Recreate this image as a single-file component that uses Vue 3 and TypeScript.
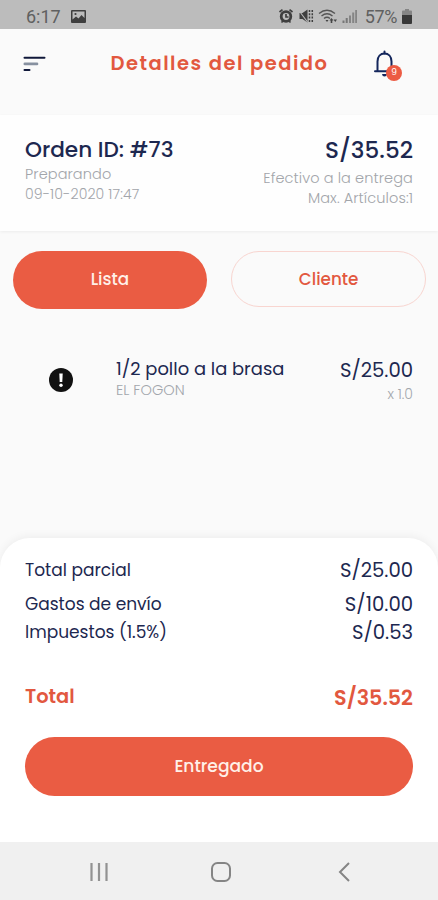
<script setup lang="ts">
interface Line {
  id: string
  label: string
  amount: string
}

const lines: Line[] = [
  { id: 'subtotal', label: 'Total parcial', amount: 'S/25.00' },
  { id: 'delivery', label: 'Gastos de envío', amount: 'S/10.00' },
  { id: 'tax', label: 'Impuestos (1.5%)', amount: 'S/0.53' },
]
</script>

<template>
  <div class="screen">
    <div class="status">
      <span class="clock">6:17</span>
      <svg class="photo" width="15" height="13" viewBox="0 0 15 13">
        <path fill="#3f3f3f" fill-rule="evenodd" d="M1 0h13a1 1 0 0 1 1 1v11a1 1 0 0 1-1 1H1a1 1 0 0 1-1-1V1a1 1 0 0 1 1-1zM1.500 1.500v8l3.500-3 2.500 2L10.500 5 13.500 8V1.500z" />
        <circle cx="4.500" cy="4" r="1.100" fill="#3f3f3f" />
      </svg>
      <svg class="indicators" width="81" height="18" viewBox="0 0 81 18">
        <g fill="none" stroke="#3f3f3f" stroke-width="1.700">
          <circle cx="8" cy="9.500" r="4.800" stroke-width="2.800" />
          <path d="M1.500 5L4.500 2.600M14.500 5L11.500 2.600M8 7v3h2.500M3.500 15.500l2-2M12.500 15.500l-2-2" />
        </g>
        <path fill="#3f3f3f" d="M21.500 6h3l5-3.500v13l-5-3.500h-3z" />
        <path fill="none" stroke="#bcbcbc" stroke-width="1.100" d="M20.500 3l9 12" />
        <path fill="none" stroke="#3f3f3f" stroke-width="1.500" stroke-dasharray="2 1.300" d="M31.500 3v12.500M34.300 3v12.500" />
        <g fill="none" stroke="#555" stroke-width="1.400">
          <path d="M41 6.500q8-6.500 16 0M43.500 9q5.500-4.500 11 0M46 11.500q3-2.500 6 0" />
        </g>
        <path fill="#444" d="M47.500 13h3L49 15zM51.500 13.500l2-2.500 2 2.500zM55.500 12.500H59l-1.700 2.500zM52.700 13h1.600v3h-1.600z" />
        <g fill="#777">
          <path d="M64.500 13.500h2V16h-2zM67.700 11h2v5h-2z" />
          <path d="M71 8.500h2V16h-2zM74.200 5.500h2V16h-2zM77.200 3h1.800v13h-1.800z" opacity=".8" />
        </g>
      </svg>
      <span class="percent">57%</span>
      <svg class="battery" width="10" height="15" viewBox="0 0 10 15">
        <path fill="#858585" d="M3 0h4v1.500h2q1 0 1 1V7H0V2.500q0-1 1-1h2z" />
        <path fill="#383838" d="M0 6h10v8q0 1-1 1H1q-1 0-1-1z" />
      </svg>
    </div>

    <header class="header">
      <svg class="menu" width="23" height="16" viewBox="0 0 23 16">
        <path stroke="#10183a" stroke-width="2" stroke-linecap="round" d="M1.500 1.800h20M1.500 14h5" />
        <path stroke="#8791a0" stroke-width="2.600" stroke-linecap="round" d="M1.800 7.900h12.200" />
      </svg>
      <h1 class="title">Detalles del pedido</h1>
      <div class="bell">
        <svg width="24" height="30" viewBox="0 0 24 30">
          <path fill="none" stroke="#14265c" stroke-width="2" d="M4.500 22V12.500C4.500 7.500 7.500 4.500 11.500 4.500s7 3 7 8V22" />
          <path stroke="#14265c" stroke-width="2" stroke-linecap="round" d="M11.500 2.500v2M2 22.300h18.500" />
          <path fill="#14265c" d="M9 25h5q-.3 2.500-2.500 2.500T9 25z" />
        </svg>
        <span class="badge">9</span>
      </div>
    </header>

    <section class="order">
      <div class="col">
        <strong class="order-id">Orden ID: #73</strong>
        <span class="meta">Preparando</span>
        <span class="meta date">09-10-2020 17:47</span>
      </div>
      <div class="col end">
        <strong class="order-price">S/35.52</strong>
        <span class="meta">Efectivo a la entrega</span>
        <span class="meta">Max. Artículos:1</span>
      </div>
    </section>

    <nav class="tabs">
      <button class="tab active">Lista</button>
      <button class="tab outline">Cliente</button>
    </nav>

    <article class="item">
      <svg class="alert" width="24" height="24" viewBox="0 0 24 24">
        <circle cx="12" cy="12" r="12" fill="#111" />
        <path fill="#fff" d="M10.300 5.500h3.400l-.4 8.500h-2.600z" />
        <circle cx="12" cy="17.200" r="1.700" fill="#fff" />
      </svg>
      <div class="col item-text">
        <span class="item-name">1/2 pollo a la brasa</span>
        <span class="item-shop">EL FOGON</span>
      </div>
      <div class="col end">
        <span class="amount">S/25.00</span>
        <span class="qty">x 1.0</span>
      </div>
    </article>

    <section class="sheet">
      <div v-for="line in lines" :key="line.id" class="line" :class="line.id">
        <span class="label">{{ line.label }}</span>
        <span class="amount">{{ line.amount }}</span>
      </div>
      <div class="total">
        <span class="total-label">Total</span>
        <span class="total-amount">S/35.52</span>
      </div>
      <button class="deliver">Entregado</button>
    </section>

    <footer class="softkeys">
      <svg width="20" height="20" viewBox="0 0 20 20">
        <path stroke="#929292" stroke-width="2.200" d="M2.500 1v18M10 1v18M17.500 1v18" />
      </svg>
      <svg class="home" width="20" height="20" viewBox="0 0 20 20">
        <rect x="1" y="1" width="18" height="18" rx="5.500" fill="none" stroke="#858585" stroke-width="2" />
      </svg>
      <svg width="12" height="20" viewBox="0 0 12 20">
        <path fill="none" stroke="#858585" stroke-width="2" d="M11 1L2 10l9 9" />
      </svg>
    </footer>
  </div>
</template>

<style>
body {
  margin: 0;
  background: #fafafa;
}
</style>

<style scoped>
.screen {
  display: flex;
  flex-direction: column;
  width: 438px;
  height: 900px;
  overflow: hidden;
  box-sizing: border-box;
  background: #fafafa;
  color: #1d2850;
  font-family: Poppins, Inter, "Liberation Sans", sans-serif;
}
.status {
  display: flex;
  align-items: center;
  height: 29px;
  padding: 3px 26px 0 26px;
  box-sizing: border-box;
  flex: none;
  background: #bcbcbc;
  color: #606060;
  font-family: Roboto, sans-serif;
  font-size: 18px;
}
.photo {
  margin-left: 10px;
}
.indicators {
  margin-left: auto;
}
.percent {
  margin-left: 6px;
  letter-spacing: -0.4px;
}
.battery {
  margin-left: 5px;
}
.header {
  display: flex;
  align-items: center;
  height: 86px;
  flex: none;
  padding: 0 41px 16px 23px;
  box-sizing: border-box;
}
.title {
  margin: 0 0 0 64.5px;
  color: #e2583f;
  font-size: 19.5px;
  font-weight: 600;
  line-height: 28px;
  letter-spacing: 1.48px;
  white-space: nowrap;
}
.bell {
  position: relative;
  width: 24px;
  height: 30px;
  margin-left: auto;
}
.badge {
  position: absolute;
  left: 13px;
  top: 16px;
  width: 16px;
  height: 16px;
  border-radius: 50%;
  background: #ec5b43;
  color: #fff;
  font-size: 9px;
  line-height: 15px;
  text-align: center;
}
.order {
  display: flex;
  justify-content: space-between;
  height: 116px;
  flex: none;
  padding: 20px 25px 0;
  box-sizing: border-box;
  background: #fefefe;
  box-shadow: 0 1px 3px rgba(0, 0, 0, 0.06);
}
.col {
  display: flex;
  flex-direction: column;
  align-items: flex-start;
  white-space: nowrap;
}
.col.end {
  align-items: flex-end;
}
.order-id {
  font-size: 21.6px;
  font-weight: 500;
  line-height: 29px;
}
.order-price {
  font-size: 23.1px;
  font-weight: 500;
  line-height: 31px;
  margin-bottom: 2px;
}
.meta {
  color: #a2a5aa;
  font-size: 14.5px;
  font-weight: 300;
  line-height: 20px;
  letter-spacing: 0.1px;
}
.date {
  font-size: 14.1px;
}
.tabs {
  display: grid;
  grid-template-columns: 1fr 1fr;
  align-items: start;
  gap: 24px;
  padding: 20px 12px 0 12.5px;
}
.tab {
  height: 58px;
  border: 0;
  border-radius: 29px;
  font: 500 16.8px/20px Poppins, Inter, sans-serif;
  padding: 0 0 2px;
  box-sizing: border-box;
}
.active {
  background: #ea5c43;
  color: #fff0e8;
}
.outline {
  height: 56px;
  padding: 0;
  background: #fafafa;
  border: 1px solid #f8d5d0;
  color: #e2583f;
}
.item {
  display: flex;
  align-items: flex-start;
  padding: 47px 25px 0 49px;
}
.alert {
  margin-top: 12px;
}
.item-text {
  flex: 1;
  margin-left: 43px;
}
.item-name {
  font-size: 17.9px;
  line-height: 25px;
}
.item-shop {
  color: #a2a6ac;
  font-size: 14.5px;
  font-weight: 300;
  line-height: 18px;
}
.amount {
  font-size: 19.6px;
  line-height: 28px;
}
.qty {
  color: #a2a6ac;
  font-size: 14px;
  font-weight: 300;
  line-height: 20px;
}
.sheet {
  margin-top: auto;
  height: 304px;
  flex: none;
  padding: 18px 25px 0;
  box-sizing: border-box;
  border-radius: 30px 30px 0 0;
  background: #fff;
  box-shadow: 0 -2px 8px rgba(0, 0, 0, 0.05);
}
.line,
.total {
  display: flex;
  align-items: center;
  justify-content: space-between;
  height: 28px;
}
.subtotal {
  margin-bottom: 6px;
}
.label {
  font-size: 17px;
  line-height: 26px;
  padding-bottom: 1px;
}
.total {
  margin-top: 37px;
  color: #e2583f;
  font-weight: 600;
}
.total-label {
  font-size: 19.4px;
  padding-bottom: 1px;
}
.total-amount {
  font-size: 20.7px;
}
.deliver {
  display: block;
  width: 100%;
  height: 59px;
  margin-top: 26px;
  padding: 0 0 2px;
  border: 0;
  border-radius: 30px;
  background: #ea5c43;
  color: #fff0e8;
  font: 500 17.1px/24px Poppins, Inter, sans-serif;
}
.softkeys {
  display: flex;
  align-items: center;
  justify-content: space-between;
  height: 58px;
  flex: none;
  padding: 2px 88px 0 89px;
  box-sizing: border-box;
  background: #f0f0f0;
}
.home {
  margin-right: 6px;
}
</style>
